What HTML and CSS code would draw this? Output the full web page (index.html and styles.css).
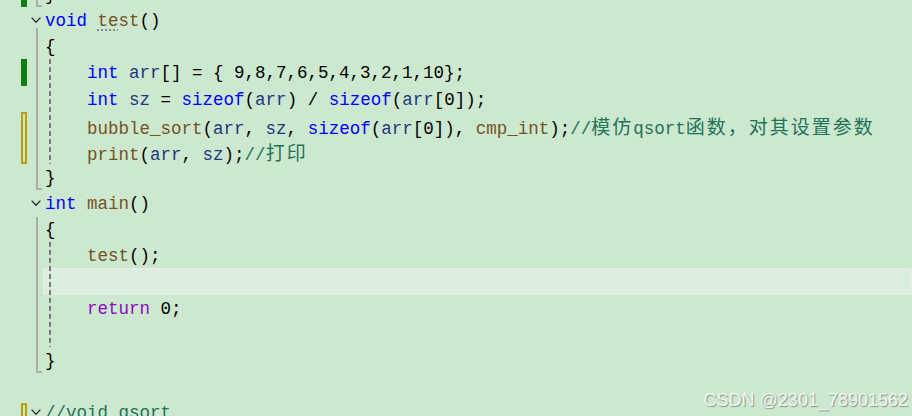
FILE: index.html
```html
<!DOCTYPE html>
<html>
<head>
<meta charset="utf-8">
<link rel="stylesheet" href="styles.css">
</head>
<body>
<div class="editor">
  <div class="chg c0"></div>
  <div class="chg c3"></div>
  <div class="unsaved u5"></div>
  <div class="unsaved u16"></div>
  <div class="scope s0"></div>
  <div class="scope s1"></div>
  <div class="scope s2"></div>
  <svg class="fold f1" viewBox="0 0 10 6"><polyline points="0.6,0.6 5,5.2 9.4,0.6"/></svg>
  <svg class="fold f8" viewBox="0 0 10 6"><polyline points="0.6,0.6 5,5.2 9.4,0.6"/></svg>
  <svg class="fold f16" viewBox="0 0 10 6"><polyline points="0.6,0.6 5,5.2 9.4,0.6"/></svg>
  <div class="cur"></div>
  <div class="guide g1"></div>
  <div class="guide g2"></div>
  <div class="ln l0">}</div>
  <div class="ln l1"><span class="k">void</span> <span class="f"><span class="hint">te</span>st</span>()</div>
  <div class="ln l2">{</div>
  <div class="ln l3">    <span class="k">int</span> <span class="v">arr</span>[] = { 9,8,7,6,5,4,3,2,1,10};</div>
  <div class="ln l4">    <span class="k">int</span> <span class="v">sz</span> = <span class="k">sizeof</span>(<span class="v">arr</span>) / <span class="k">sizeof</span>(<span class="v">arr</span>[0]);</div>
  <div class="ln l5">    <span class="f">bubble_sort</span>(<span class="v">arr</span>, <span class="v">sz</span>, <span class="k">sizeof</span>(<span class="v">arr</span>[0]), <span class="f">cmp_int</span>);<span class="c">//<span class="cn">模仿</span>qsort<span class="cn">函数，对其设置参数</span></span></div>
  <div class="ln l6">    <span class="f">print</span>(<span class="v">arr</span>, <span class="v">sz</span>);<span class="c">//<span class="cn">打印</span></span></div>
  <div class="ln l7">}</div>
  <div class="ln l8"><span class="k">int</span> <span class="f">main</span>()</div>
  <div class="ln l9">{</div>
  <div class="ln l10">    <span class="f">test</span>();</div>
  <div class="ln l12">    <span class="r">return</span> 0;</div>
  <div class="ln l14">}</div>
  <div class="ln l16"><span class="c">//void qsort</span></div>
</div>
<div class="wm">CSDN @2301_78901562</div>
</body>
</html>
```

FILE: styles.css
```css
html, body {
  margin: 0;
  padding: 0;
  height: 416px;
  overflow: hidden;
  background: #cce8cf;
}
body {
  position: relative;
}
.editor {
  display: grid;
  grid-template-columns: 21px 6px 18px 1fr;
  grid-template-rows: repeat(17, 26.13px);
  margin-top: -19px;
  font-family: "Liberation Mono", "DejaVu Sans Mono", monospace;
  font-size: 17.5px;
  line-height: 26.13px;
  color: #000;
}
.ln {
  grid-column: 4;
  white-space: pre;
  padding-top: 1px;
}
.l0 { grid-row: 1; }
.l1 { grid-row: 2; }
.l2 { grid-row: 3; }
.l3 { grid-row: 4; }
.l4 { grid-row: 5; }
.l5 { grid-row: 6; }
.l6 { grid-row: 7; }
.l7 { grid-row: 8; }
.l8 { grid-row: 9; }
.l9 { grid-row: 10; }
.l10 { grid-row: 11; }
.l12 { grid-row: 13; }
.l14 { grid-row: 15; }
.l16 { grid-row: 17; }

.k { color: #0000ff; }
.f { color: #74531f; }
.v { color: #1f377f; }
.r { color: #8f08c4; }
.c { color: #1f7358; }
.cn {
  font-family: "Noto Sans CJK SC", sans-serif;
  font-size: 19px;
  letter-spacing: 2px;
}
.hint {
  text-decoration: underline dotted #8c8c8c;
  text-decoration-thickness: 2px;
  text-underline-offset: 3px;
}

.chg {
  grid-column: 2;
  background: #127d12;
}
.c0 { grid-row: 1; }
.c3 { grid-row: 4; }
.unsaved {
  grid-column: 2;
  border: 2px solid #b89e06;
  box-sizing: border-box;
}
.u5 { grid-row: 6 / 8; }
.u16 { grid-row: 17; margin-top: 4px; }

.scope {
  grid-column: 3;
  margin-left: 9px;
  width: 4px;
  border-left: 2px solid #a9aea9;
  border-bottom: 2px solid #a9aea9;
}
.s0 { grid-row: 1; }
.s1 { grid-row: 2 / 9; margin-top: 21px; }
.s2 { grid-row: 9 / 16; margin-top: 27px; }

.fold {
  grid-column: 3;
  align-self: center;
  margin-left: 4px;
  width: 10px;
  height: 6px;
  fill: none;
  stroke: #222;
  stroke-width: 1.3;
}
.f1 { grid-row: 2; }
.f8 { grid-row: 9; }
.f16 { grid-row: 17; }

.cur {
  grid-column: 3 / 5;
  grid-row: 12;
  margin-left: 16px;
  border: 2px solid #e4ece5;
  background: #daeedd;
  box-sizing: border-box;
}
.guide {
  grid-column: 4;
  width: 2px;
  margin-left: 4px;
  background: repeating-linear-gradient(to bottom, #7a7a7a 0 5px, transparent 5px 8px);
}
.g1 { grid-row: 4 / 8; }
.g2 { grid-row: 11 / 15; }

.wm {
  position: absolute;
  right: 4px;
  bottom: 6px;
  font-family: "Liberation Sans", Arial, sans-serif;
  font-size: 18px;
  line-height: 20px;
  color: rgba(255, 255, 255, 0.85);
  text-shadow: 1px 1px 1px rgba(0, 0, 0, 0.35);
}
```
